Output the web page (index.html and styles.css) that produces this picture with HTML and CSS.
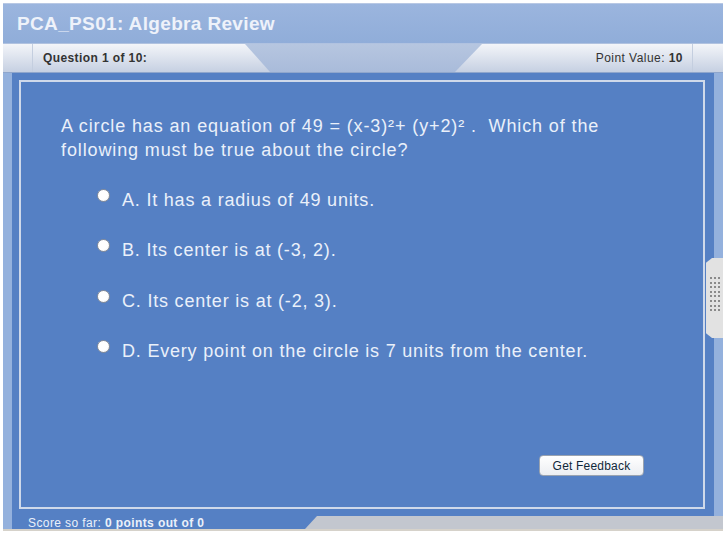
FILE: index.html
```html
<!DOCTYPE html>
<html lang="en">
  <head>
    <meta charset="UTF-8" />
    <title>PCA_PS01: Algebra Review</title>
    <link rel="stylesheet" href="styles.css">
  </head>
  <body>
    <div class="app">
      <header class="titlebar">
        <h1>PCA_PS01: Algebra Review</h1>
      </header>

      <div class="qbar">
        <div class="tab tab-left">
          <span class="cap"></span>
          <span class="qnum">Question 1 of 10:</span>
        </div>
        <div class="tab tab-right">
          <span class="points">Point Value: <b>10</b></span>
          <span class="cap"></span>
        </div>
      </div>

      <div class="main">
        <div class="body">
          <div class="panel">
            <p class="question">
              A circle has an equation of 49 = (x-3)²+ (y+2)² .&nbsp; Which of the
              following must be true about the circle?
            </p>
            <ul class="options">
              <li><span class="radio"></span>A. It has a radius of 49 units.</li>
              <li><span class="radio"></span>B. Its center is at (-3, 2).</li>
              <li><span class="radio"></span>C. Its center is at (-2, 3).</li>
              <li><span class="radio"></span>D. Every point on the circle is 7 units from the center.</li>
            </ul>
            <button class="feedback">Get Feedback</button>
          </div>
        </div>
        <div class="handle">
          <span></span><span></span><span></span><span></span><span></span><span></span><span></span><span></span>
          <span></span><span></span><span></span><span></span><span></span><span></span><span></span><span></span>
          <span></span><span></span><span></span><span></span><span></span><span></span><span></span><span></span>
        </div>
      </div>

      <div class="footer">
        <div class="side"></div>
        <div class="score">Score so far: <b>0 points out of 0</b></div>
        <div class="rest"></div>
      </div>
    </div>
  </body>
</html>
```

FILE: styles.css
```css
:root {
  --blue: #5580c4;
  --blue-light: #94b1dd;
  --text-light: #eaf0fa;
  --tab-top: #f3f5f9;
  --tab-bottom: #c6d0e2;
}

* {
  box-sizing: border-box;
}

body {
  margin: 0;
  background: #ffffff;
  font-family: "Liberation Sans", Arial, sans-serif;
}

.app {
  width: 723px;
  padding: 3px 0 0 3px;
}

/* title */
.titlebar {
  height: 40px;
  background: linear-gradient(#9bb5de, #90add9);
  border-top: 1px solid #b8c8e4;
  display: flex;
  align-items: center;
  padding-left: 14px;
}

.titlebar h1 {
  margin: 0;
  font-size: 19px;
  letter-spacing: 0.35px;
  font-weight: bold;
  color: #eef2fa;
}

/* question bar */
.qbar {
  height: 30px;
  display: flex;
  justify-content: space-between;
  background: linear-gradient(#b6c6e0, #a9bbda);
  border-top: 1px solid #b0c2e0;
  border-bottom: 1px solid #8fa6cc;
}

.tab {
  display: flex;
  align-items: stretch;
  background: linear-gradient(var(--tab-top), var(--tab-bottom));
  font-size: 12px;
  color: #333333;
}

.tab-left {
  width: 267px;
  clip-path: polygon(0 0, 242px 0, 100% 100%, 0 100%);
}

.tab-right {
  width: 268px;
  justify-content: flex-end;
  clip-path: polygon(27px 0, 100% 0, 100% 100%, 0 100%);
}

.cap {
  width: 30px;
  border-right: 1px solid #c4cedf;
}

.tab-right .cap {
  width: 31px;
  border-right: none;
  border-left: 1px solid #c4cedf;
}

.qnum {
  font-weight: bold;
  padding-left: 10px;
  line-height: 28px;
  letter-spacing: 0.4px;
}

.points {
  padding-right: 9px;
  line-height: 28px;
  letter-spacing: 0.45px;
}

/* main area */
.main {
  position: relative;
  background: var(--blue-light);
  padding: 0 9px;
}

.body {
  background: var(--blue);
  padding: 7px 9px 7px 7px;
}

.panel {
  height: 429px;
  border: 2px solid #cfd9ea;
  display: flex;
  flex-direction: column;
  padding: 33px 0 0 40px;
  color: var(--text-light);
}

.question {
  margin: 0;
  font-size: 18px;
  line-height: 23.5px;
  letter-spacing: 0.88px;
  width: 590px;
}

.options {
  list-style: none;
  margin: 27px 0 0 0;
  padding: 0 0 0 61px;
  font-size: 18px;
  letter-spacing: 0.8px;
}

.options li {
  position: relative;
  height: 22px;
  line-height: 22px;
  margin-bottom: 28.3px;
}

.radio {
  position: absolute;
  left: -25px;
  top: 0;
  width: 13px;
  height: 13px;
  border-radius: 50%;
  background: radial-gradient(circle at 40% 40%, #ffffff 55%, #e6e6e6);
  border: 1px solid #8a8f99;
}

.feedback {
  margin: auto 59px 31px auto;
  width: 105px;
  height: 21px;
  padding: 0;
  font-family: "Liberation Sans", Arial, sans-serif;
  font-size: 12px;
  letter-spacing: 0.2px;
  color: #10283a;
  background: linear-gradient(#ffffff, #eceef2);
  border: 1px solid #9aa3b0;
  border-radius: 4px;
}

/* side handle */
.handle {
  position: absolute;
  right: 0;
  top: 185px;
  width: 17px;
  height: 80px;
  background: #e2e2e2;
  clip-path: polygon(6px 0, 100% 0, 100% 100%, 6px 100%, 0 94%, 0 6%);
  display: grid;
  grid-template-columns: repeat(3, 2px);
  grid-auto-rows: 2px;
  column-gap: 2px;
  row-gap: 2.6px;
  padding: 19px 0 0 4px;
}

.handle span {
  background: #8a8a8a;
}

/* footer */
.footer {
  height: 13px;
  display: flex;
  background: #c3c7cf;
  border-bottom: 2px solid #d6d2ca;
  box-sizing: content-box;
}

.side {
  width: 9px;
  background: var(--blue-light);
}

.score {
  width: 305px;
  background: var(--blue);
  clip-path: polygon(0 0, 100% 0, 293px 100%, 0 100%);
  color: var(--text-light);
  font-size: 12px;
  line-height: 14px;
  letter-spacing: 0.4px;
  padding-left: 16px;
  white-space: nowrap;
}

.rest {
  flex: 1;
}
```
